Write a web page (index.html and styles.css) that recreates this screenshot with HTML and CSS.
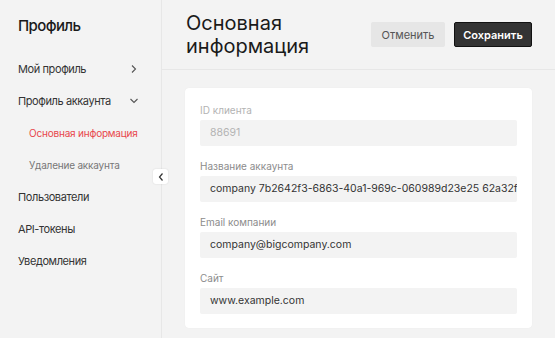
FILE: index.html
```html
<!DOCTYPE html>
<html lang="ru">
<head>
<meta charset="utf-8">
<link rel="stylesheet" href="styles.css">
</head>
<body>
<div class="app">
  <aside class="sidebar">
    <h1 class="side-title">Профиль</h1>
    <nav class="nav">
      <div class="nav-item">Мой профиль
        <svg class="chev" width="10" height="10" viewBox="0 0 10 10"><path d="M3 1.5 L6.5 5 L3 8.5" fill="none" stroke="#555" stroke-width="1.1"/></svg>
      </div>
      <div class="nav-item">Профиль аккаунта
        <svg class="chev" width="10" height="10" viewBox="0 0 10 10"><path d="M1.5 3 L5 6.5 L8.5 3" fill="none" stroke="#555" stroke-width="1.1"/></svg>
      </div>
      <div class="nav-sub active">Основная информация</div>
      <div class="nav-sub">Удаление аккаунта</div>
      <div class="nav-item">Пользователи</div>
      <div class="nav-item">API-токены</div>
      <div class="nav-item">Уведомления</div>
    </nav>
    <button class="collapse"><svg width="8" height="10" viewBox="0 0 8 10"><path d="M5.5 1.5 L2.5 5 L5.5 8.5" fill="none" stroke="#333" stroke-width="1.2"/></svg></button>
  </aside>
  <main class="main">
    <header class="header">
      <h2 class="page-title">Основная<br>информация</h2>
      <div class="actions">
        <button class="btn btn-cancel">Отменить</button>
        <button class="btn btn-save">Сохранить</button>
      </div>
    </header>
    <section class="card">
      <div class="field disabled">
        <div class="label">ID клиента</div>
        <div class="input">88691</div>
      </div>
      <div class="field">
        <div class="label">Название аккаунта</div>
        <div class="input">company 7b2642f3-6863-40a1-969c-060989d23e25 62a32f</div>
      </div>
      <div class="field">
        <div class="label">Email компании</div>
        <div class="input">company@bigcompany.com</div>
      </div>
      <div class="field">
        <div class="label">Сайт</div>
        <div class="input">www.example.com</div>
      </div>
    </section>
  </main>
</div>
</body>
</html>
```
FILE: styles.css
```css
* { box-sizing: border-box; }
html, body { margin: 0; padding: 0; }
body {
  font-family: Inter, "Noto Sans", sans-serif;
  background: #f3f3f3;
  color: #333;
  width: 555px;
  height: 338px;
  overflow: hidden;
}
.app {
  display: flex;
  height: 338px;
}
.sidebar {
  position: relative;
  width: 162px;
  flex: none;
  background: #f3f3f3;
  border-right: 1px solid #e7e7e7;
  padding: 16px 0 0 18px;
}
.side-title {
  margin: 0;
  font-size: 15px;
  line-height: 20px;
  font-weight: 500;
  letter-spacing: -0.6px;
  color: #1a1a1a;
}
.nav {
  margin-top: 17px;
  display: flex;
  flex-direction: column;
}
.nav-item, .nav-sub {
  height: 32px;
  font-size: 11px;
  letter-spacing: -0.4px;
  display: flex;
  align-items: center;
  justify-content: space-between;
  padding-right: 22px;
  color: #333;
  white-space: nowrap;
}
.nav-sub {
  font-size: 10px;
  letter-spacing: -0.2px;
  padding-left: 11px;
  color: #777;
}
.nav-sub.active { color: #e8474c; }
.chev { flex: none; }
.collapse {
  position: absolute;
  left: 153px;
  top: 169px;
  width: 15px;
  height: 15px;
  padding: 0;
  border: none;
  border-radius: 3px;
  background: #fff;
  box-shadow: 0 0 2px rgba(0,0,0,0.12);
  display: flex;
  align-items: center;
  justify-content: center;
}
.main {
  flex: 1;
  min-width: 0;
  display: flex;
  flex-direction: column;
}
.header {
  height: 70px;
  border-bottom: 1px solid #e7e7e7;
  display: flex;
  align-items: center;
  justify-content: space-between;
  padding: 0 23px 0 24px;
}
.page-title {
  margin: 0;
  font-size: 20px;
  line-height: 23px;
  font-weight: 400;
  color: #1a1a1a;
}
.actions {
  display: flex;
  gap: 9px;
}
.btn {
  height: 25px;
  font-family: Inter, "Noto Sans", sans-serif;
  font-size: 11px;
  border-radius: 2px;
  padding: 0;
}
.btn-cancel {
  width: 74px;
  background: #e6e6e6;
  border: none;
  color: #555;
}
.btn-save {
  width: 78px;
  background: #333;
  border: 1px solid #111;
  color: #fff;
  font-weight: 600;
}
.card {
  margin: 18px 23px 0 23px;
  background: #fff;
  border-radius: 4px;
  padding: 15px 15px 14px;
  box-shadow: 0 0 1px rgba(0,0,0,0.08);
}
.field + .field { margin-top: 13px; }
.label {
  font-size: 10px;
  line-height: 14px;
  color: #8c8c8c;
  margin-bottom: 3px;
}
.input {
  height: 26px;
  line-height: 26px;
  background: #f3f3f3;
  border-radius: 2px;
  padding: 0 10px;
  font-size: 10.5px;
  color: #333;
  white-space: nowrap;
  overflow: hidden;
}
.field.disabled .label,
.field.disabled .input { color: #b3b3b3; }
```
